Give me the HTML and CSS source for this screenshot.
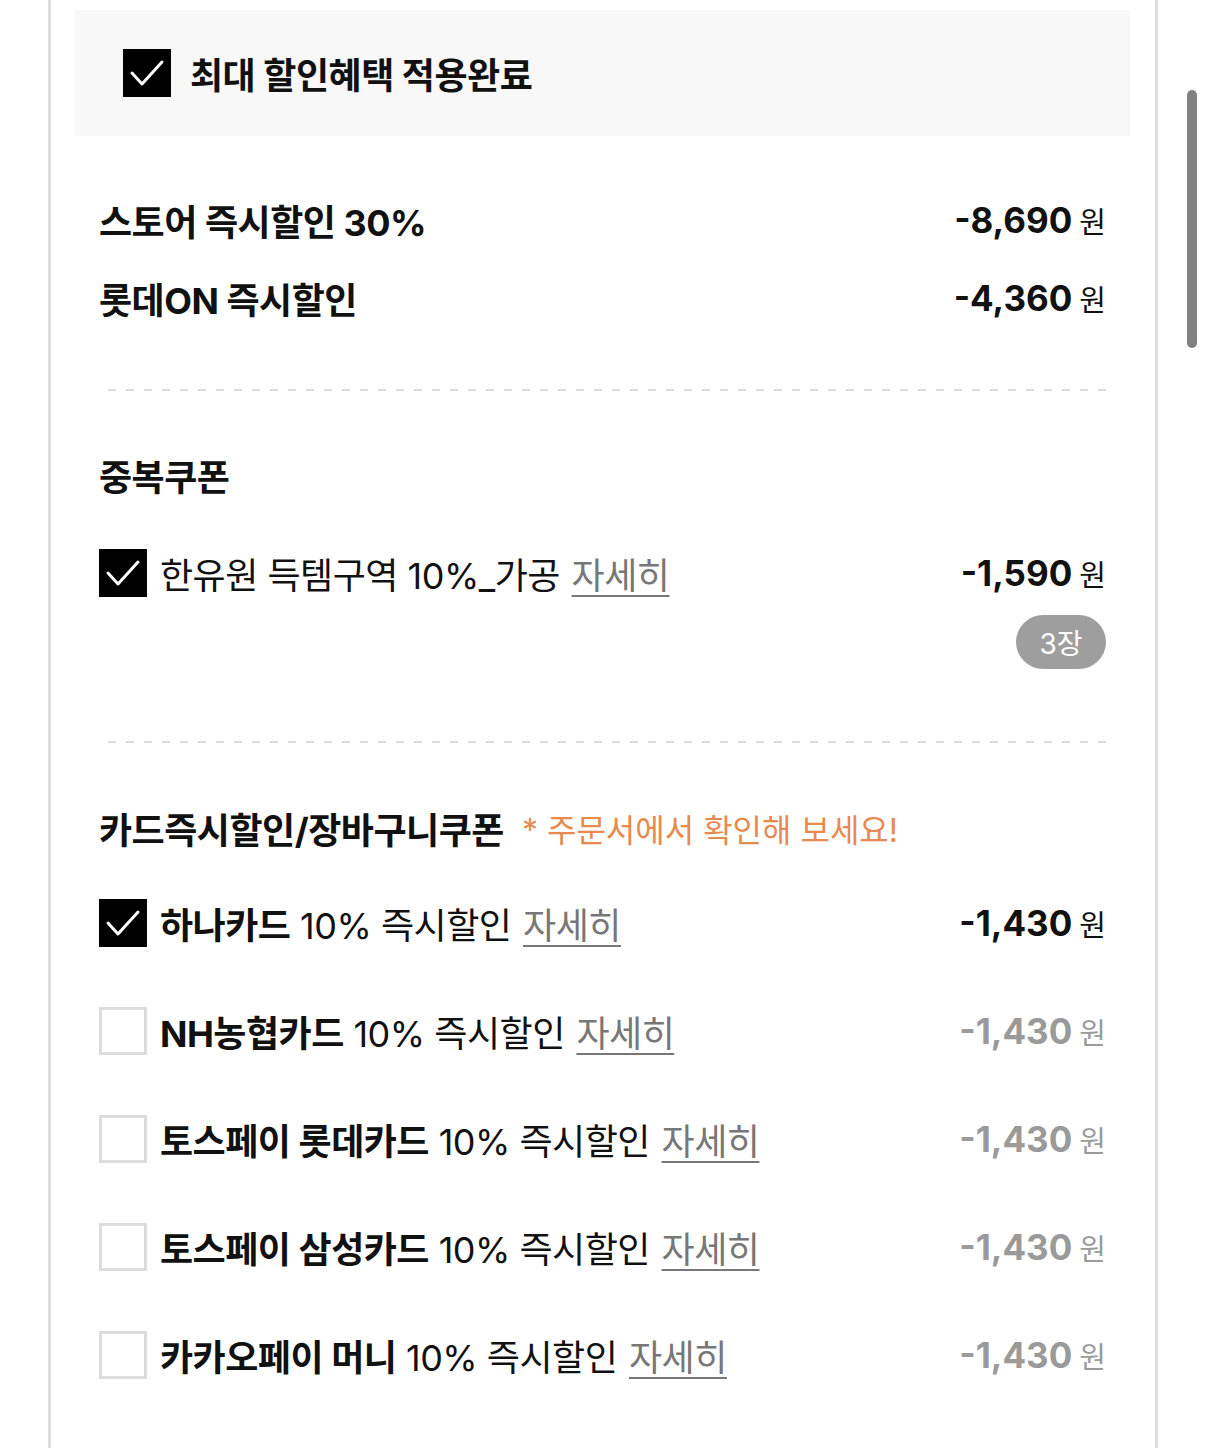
FILE: index.html
```html
<!DOCTYPE html>
<html>
<head>
  <title>할인혜택</title>
  <meta name="viewport" content="width=device-width, initial-scale=1">
  <link rel="stylesheet" href="styles.css">
</head>
<body>
  <div class="panel">
    <div class="best">
      <span class="check on"><svg viewBox="0 0 48 48"><polyline points="9,24 19,35 39,13"/></svg></span>
      <span class="best-title">최대 할인혜택 적용완료</span>
    </div>

    <div class="section first">
      <div class="row">
        <span class="label">스토어 즉시할인 30%</span>
        <span class="price">-8,690<em>원</em></span>
      </div>
      <div class="row">
        <span class="label">롯데ON 즉시할인</span>
        <span class="price">-4,360<em>원</em></span>
      </div>
    </div>

    <div class="dash"></div>

    <div class="section coupon">
      <div class="heading">중복쿠폰</div>
      <div class="item">
        <span class="check on"><svg viewBox="0 0 48 48"><polyline points="9,24 19,35 39,13"/></svg></span>
        <span class="name">한유원 득템구역 10%_가공 <a class="more">자세히</a></span>
        <span class="price">-1,590<em>원</em></span>
      </div>
      <div class="count-wrap"><span class="count">3장</span></div>
    </div>

    <div class="dash"></div>

    <div class="section cards">
      <div class="heading">카드즉시할인/장바구니쿠폰 <span class="note">* 주문서에서 확인해 보세요!</span></div>
      <div class="item">
        <span class="check on"><svg viewBox="0 0 48 48"><polyline points="9,24 19,35 39,13"/></svg></span>
        <span class="name"><b>하나카드</b> 10% 즉시할인 <a class="more">자세히</a></span>
        <span class="price">-1,430<em>원</em></span>
      </div>
      <div class="item">
        <span class="check"></span>
        <span class="name"><b>NH농협카드</b> 10% 즉시할인 <a class="more">자세히</a></span>
        <span class="price off">-1,430<em>원</em></span>
      </div>
      <div class="item">
        <span class="check"></span>
        <span class="name"><b>토스페이 롯데카드</b> 10% 즉시할인 <a class="more">자세히</a></span>
        <span class="price off">-1,430<em>원</em></span>
      </div>
      <div class="item">
        <span class="check"></span>
        <span class="name"><b>토스페이 삼성카드</b> 10% 즉시할인 <a class="more">자세히</a></span>
        <span class="price off">-1,430<em>원</em></span>
      </div>
      <div class="item">
        <span class="check"></span>
        <span class="name"><b>카카오페이 머니</b> 10% 즉시할인 <a class="more">자세히</a></span>
        <span class="price off">-1,430<em>원</em></span>
      </div>
    </div>
  </div>

  <div class="scrollbar"></div>
</body>
</html>
```

FILE: styles.css
```css
body { margin: 0; font-family: Inter, "Noto Sans CJK KR", sans-serif; color: #111; background: #fff; }
.panel {
  margin-left: 48px;
  width: 1110px;
  min-height: 1448px;
  box-sizing: border-box;
  border-left: 3px solid #dedede;
  border-right: 3px solid #dedede;
  padding: 10px 25px 0 24px;
}
.best { display: flex; align-items: center; height: 126px; background: #f8f8f8; padding-left: 48px; gap: 19px; }
.best-title { font-size: 36px; font-weight: 700; letter-spacing: -0.5px; }

.check { display: flex; width: 48px; height: 48px; box-sizing: border-box; border: 3px solid #dcdcdc; background: #fff; flex-shrink: 0; }
.check.on { border: none; background: #000; }
.check svg { width: 48px; height: 48px; }
.check polyline { fill: none; stroke: #fff; stroke-width: 3; stroke-linecap: round; stroke-linejoin: round; }

.section { padding: 0 24px; }
.section.first { padding-top: 45px; padding-bottom: 52px; }
.row { display: flex; justify-content: space-between; align-items: center; height: 78px; }
.label { font-size: 36px; font-weight: 700; letter-spacing: -0.5px; }

.price { font-size: 35px; font-weight: 700; white-space: nowrap; display: flex; align-items: baseline; }
.price em { font-style: normal; font-weight: 400; font-size: 29px; margin-left: 7px; }
.price.off { color: #9a9a9a; }

.dash { height: 2px; margin: 0 24px; background: repeating-linear-gradient(270deg, #dcdcdc 0 8px, transparent 8px 18px); }

.heading { display: flex; align-items: center; height: 48px; font-size: 36px; font-weight: 700; letter-spacing: -0.5px; }
.note { color: #e88a4f; font-weight: 400; font-size: 32px; letter-spacing: 0; margin-left: 18px; }

.coupon { padding-top: 60px; padding-bottom: 72px; }
.coupon .item { margin-top: 50px; }
.count-wrap { display: flex; justify-content: flex-end; margin-top: 18px; }
.count { display: flex; align-items: center; justify-content: center; width: 90px; height: 54px; border-radius: 27px; background: #9e9e9e; color: #fff; font-size: 28px; }

.cards { padding-top: 61px; }
.cards .item { margin-top: 60px; }
.cards .heading + .item { margin-top: 47px; }

.item { display: flex; align-items: center; height: 48px; }
.item .name { flex: 1; margin-left: 13px; font-size: 36px; letter-spacing: -0.5px; white-space: nowrap; }
.item .name b { font-weight: 700; }
.more { color: #777; text-decoration: underline; text-underline-offset: 6px; text-decoration-thickness: 2px; margin-left: 2px; }

.scrollbar { position: fixed; top: 90px; right: 9px; width: 10px; height: 258px; border-radius: 5px; background: #808080; }
```
